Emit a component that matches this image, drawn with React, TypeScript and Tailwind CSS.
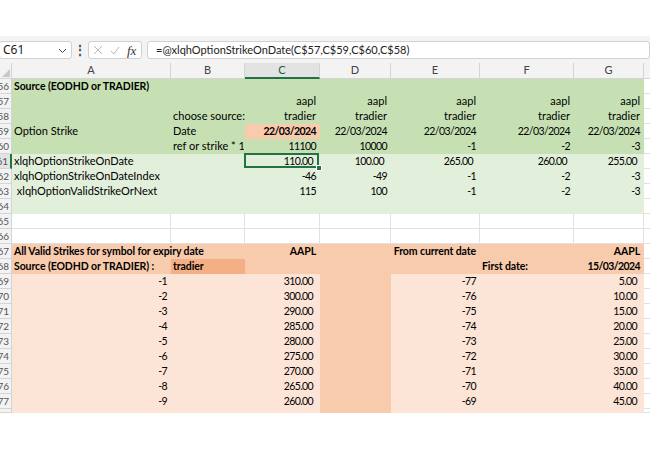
import React from 'react';

type Bg = 'w' | 'g1' | 'g2' | 'o1' | 'o2' | 'o3';
type Cell = { t?: string; r?: boolean; b?: boolean; bg?: Bg; pad?: boolean; clip?: boolean; over?: boolean; sel?: boolean };

const bgClass: Record<Bg, string> = {
  w: 'bg-white border-[#e1e1e1]',
  g1: 'bg-[#c6e0b4] border-[#c6e0b4]',
  g2: 'bg-[#e2efda] border-[#e2efda]',
  o1: 'bg-[#f8cbad] border-[#f8cbad]',
  o2: 'bg-[#f4b084] border-[#f4b084]',
  o3: 'bg-[#fce4d6] border-[#fce4d6]',
};

const mk = (bg: Bg, cells: Record<number, Cell> = {}): Cell[] =>
  Array.from({ length: 7 }, (_, i) => ({ bg, ...cells[i] }));

const num = (t: string | number, pad = false): Cell => ({ t: String(t), r: true, pad });

const strikesC = [310, 300, 290, 285, 280, 275, 270, 265, 260];

const rows: { n: number; cells: Cell[]; h?: string }[] = [
  { n: 56, cells: mk('g1', { 0: { t: 'Source (EODHD or TRADIER)', b: true } }) },
  { n: 57, cells: mk('g1', { 2: num('aapl'), 3: num('aapl'), 4: num('aapl'), 5: num('aapl'), 6: num('aapl') }) },
  {
    n: 58,
    cells: mk('g1', { 1: { t: 'choose source:' }, 2: num('tradier'), 3: num('tradier'), 4: num('tradier'), 5: num('tradier'), 6: num('tradier') }),
  },
  {
    n: 59,
    cells: mk('g1', {
      0: { t: 'Option Strike' },
      1: { t: 'Date' },
      2: { t: '22/03/2024', r: true, b: true, bg: 'o1' },
      3: num('22/03/2024'),
      4: num('22/03/2024'),
      5: num('22/03/2024'),
      6: num('22/03/2024'),
    }),
  },
  {
    n: 60,
    cells: mk('g1', { 1: { t: 'ref or strike * 100', clip: true }, 2: num(11100), 3: num(10000), 4: num(-1), 5: num(-2), 6: num(-3) }),
  },
  {
    n: 61,
    cells: mk('g2', {
      0: { t: 'xlqhOptionStrikeOnDate' },
      2: { ...num('110.00', true), sel: true },
      3: num('100.00', true),
      4: num('265.00', true),
      5: num('260.00', true),
      6: num('255.00', true),
    }),
  },
  { n: 62, cells: mk('g2', { 0: { t: 'xlqhOptionStrikeOnDateIndex' }, 2: num(-46), 3: num(-49), 4: num(-1), 5: num(-2), 6: num(-3) }) },
  { n: 63, cells: mk('g2', { 0: { t: '\u00a0xlqhOptionValidStrikeOrNext' }, 2: num(115), 3: num(100), 4: num(-1), 5: num(-2), 6: num(-3) }) },
  { n: 64, cells: mk('g2') },
  { n: 65, cells: mk('w') },
  { n: 66, cells: mk('w') },
  {
    n: 67,
    cells: mk('o1', {
      0: { t: 'All Valid Strikes for symbol for expiry date', b: true, over: true },
      2: { t: 'AAPL', r: true, b: true },
      4: { t: 'From current date', r: true, b: true },
      6: { t: 'AAPL', r: true, b: true },
    }),
  },
  {
    n: 68,
    cells: mk('o1', {
      0: { t: 'Source (EODHD or TRADIER) :', b: true },
      1: { t: 'tradier', b: true, bg: 'o2' },
      5: { t: 'First date:', b: true },
      6: { t: '15/03/2024', r: true, b: true },
    }),
  },
  ...strikesC.map((v, i) => ({
    n: 69 + i,
    cells: mk('o3', {
      0: num(-(i + 1)),
      2: num(v.toFixed(2), true),
      3: { bg: 'o1' as Bg },
      4: num(-77 + i),
      6: num((5 * (i + 1)).toFixed(2), true),
    }),
  })),
  { n: 78, cells: mk('o3', { 3: { bg: 'o1' } }), h: 'h-[4px]' },
];

const cols = ['A', 'B', 'C', 'D', 'E', 'F', 'G'];
const gridCols = 'grid grid-cols-[12px_159px_74px_75px_71px_89px_94px_70px_1fr]';

function CellView({ c, h }: { c: Cell; h?: string }) {
  const isNum = !!c.t && /^[-\d./]+$/.test(c.t);
  const font = isNum
    ? 'text-[10.5px] tracking-[-0.6px]'
    : c.b
      ? 'text-[10.5px] tracking-[-0.1px]'
      : 'text-[11px]';
  return (
    <div
      className={`${h ?? 'h-[15px]'} border-r border-b flex items-center whitespace-nowrap leading-[14px] text-black pl-[2px] ${font} ${bgClass[c.bg ?? 'w']} ${
        c.r ? 'justify-end' : 'justify-start'
      } ${c.pad ? 'pr-[6px]' : 'pr-[3px]'} ${c.b ? 'font-bold' : ''} ${c.clip || h ? 'overflow-hidden' : ''} ${c.over || c.sel ? 'relative z-10' : ''}`}
    >
      {c.t}
      {c.sel && (
        <>
          <div className="absolute -left-[1px] -top-[1px] right-0 bottom-0 border-2 border-[#217346]" />
          <div className="absolute -right-[3px] -bottom-[3px] w-[6px] h-[6px] bg-[#217346] border border-white" />
        </>
      )}
    </div>
  );
}

export default function App() {
  return (
    <div className="w-[650px] h-[450px] bg-white overflow-hidden font-['Lato','Noto_Sans',sans-serif]">
      <div className="h-[36px] bg-white" />
      {/* formula bar */}
      <div className="h-[27px] bg-[#f3f3f3] flex items-start pt-[5px]">
        <div className="w-[73px] h-[18px] bg-white border border-[#d1d1d1] rounded-[3px] flex items-center justify-between pl-[3px] pr-[4px] -ml-[1px]">
          <span className="text-[12px] text-[#222] font-['Noto_Sans',sans-serif]">C61</span>
          <svg width="9" height="6" viewBox="0 0 9 6" className="mt-[1px]">
            <path d="M1 1 L4.5 4.5 L8 1" fill="none" stroke="#444" strokeWidth="1" />
          </svg>
        </div>
        <div className="w-[16px] h-[18px] flex items-center justify-center text-[12px] text-[#444] font-bold">⋮</div>
        <div className="w-[54px] h-[18px] bg-white border border-[#d1d1d1] rounded-[3px] flex items-center pl-[4px] gap-[7px]">
          <svg width="10" height="10" viewBox="0 0 10 10">
            <path d="M1 1 L9 9 M9 1 L1 9" stroke="#b5b5b5" strokeWidth="1" />
          </svg>
          <svg width="10" height="9" viewBox="0 0 10 9">
            <path d="M1 5 L3.8 8 L9 1" fill="none" stroke="#b5b5b5" strokeWidth="1" />
          </svg>
          <span className="text-[13px] italic text-[#333] font-['Liberation_Serif',serif] leading-none">fx</span>
        </div>
        <div className="ml-[5px] flex-1 h-[18px] bg-white border border-[#d1d1d1] rounded-[3px] flex items-center pl-[8px]">
          <span className="text-[11px] text-[#222] font-['Lato',sans-serif]">=@xlqhOptionStrikeOnDate(C$57,C$59,C$60,C$58)</span>
        </div>
      </div>

      <div className={gridCols}>
        {/* header row */}
        <div className="h-[16px] bg-[#f3f3f3] border-r border-b border-[#d4d4d4] relative">
          <svg width="8" height="8" viewBox="0 0 8 8" className="absolute right-[1px] bottom-[1px]">
            <path d="M8 0 L8 8 L0 8 Z" fill="#c8c8c8" />
          </svg>
        </div>
        {cols.map((l) => (
          <div
            key={l}
            className={`h-[16px] flex items-center justify-center text-[11px] border-r border-[#d4d4d4] ${
              l === 'C' ? 'bg-[#e3e3e3] text-[#1d5e38] border-b-2 border-b-[#217346]' : 'bg-[#f3f3f3] text-[#444] border-b border-b-[#d4d4d4]'
            }`}
          >
            {l}
          </div>
        ))}
        <div className="h-[16px] bg-[#f3f3f3] border-b border-[#d4d4d4]" />

        {rows.map((r) => (
          <React.Fragment key={r.n}>
            <div
              className={`${r.h ?? 'h-[15px]'} overflow-hidden flex items-center justify-end pr-[2px] text-[10px] leading-none text-[#555] border-b ${
                r.n === 61 ? 'bg-[#e3e3e3] border-r-2 border-r-[#217346] border-b-[#d4d4d4]' : 'bg-[#f3f3f3] border-r border-[#d4d4d4]'
              }`}
            >
              <span className="whitespace-nowrap">{r.h ? '' : r.n}</span>
            </div>
            {r.cells.map((c, i) => (
              <CellView key={i} c={c} h={r.h} />
            ))}
            <div className={`${r.h ?? 'h-[15px]'} bg-white border-b border-[#e1e1e1]`} />
          </React.Fragment>
        ))}
      </div>
    </div>
  );
}
